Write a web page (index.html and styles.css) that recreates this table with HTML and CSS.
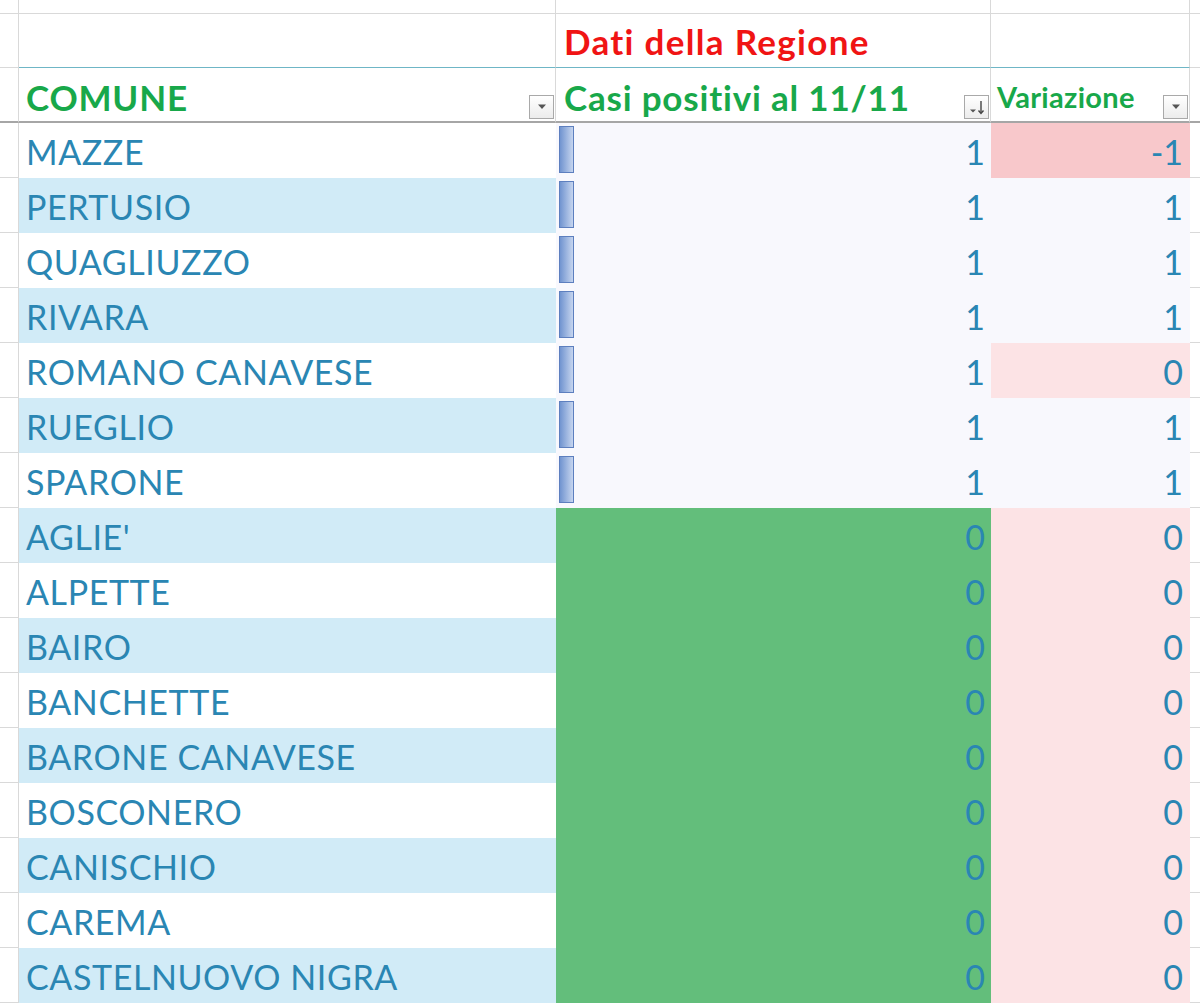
FILE: index.html
```html
<!DOCTYPE html>
<html lang="it">
<head>
<meta charset="utf-8">
<title>Casi positivi</title>
<link rel="stylesheet" href="styles.css">
</head>
<body>
<div class="sheet">
  <div class="row r-top">
    <div class="c a"></div><div class="c b"></div><div class="c cc"></div><div class="c d"></div><div class="c e"></div>
  </div>
  <div class="row r-title">
    <div class="c a"></div>
    <div class="c b"></div>
    <div class="c cc"><span class="title">Dati della Regione</span></div>
    <div class="c d"></div>
    <div class="c e"></div>
  </div>
  <div class="row r-head">
    <div class="c a"></div>
    <div class="c b"><span class="htext">COMUNE</span><span class="fbtn"><svg width="10" height="6" viewBox="0 0 10 6"><path d="M1 0.5h8L5 5z" fill="#555"/></svg></span></div>
    <div class="c cc"><span class="htext">Casi positivi al 11/11</span><span class="fbtn"><svg width="20" height="18" viewBox="0 0 20 18"><path d="M3 11.5h6L6 14.5z" fill="#555"/><path d="M14 3v12" stroke="#444" stroke-width="1.4"/><path d="M11.5 12.5L14 15.5l2.5-3" fill="none" stroke="#444" stroke-width="1.4"/></svg></span></div>
    <div class="c d"><span class="htext small">Variazione</span><span class="fbtn"><svg width="10" height="6" viewBox="0 0 10 6"><path d="M1 0.5h8L5 5z" fill="#555"/></svg></span></div>
    <div class="c e"></div>
  </div>

  <div class="row"><div class="c a"></div><div class="c b name">MAZZE</div><div class="c cc num pos"><span class="bar"></span><span>1</span></div><div class="c d num neg">-1</div><div class="c e"></div></div>
  <div class="row"><div class="c a"></div><div class="c b name band">PERTUSIO</div><div class="c cc num pos"><span class="bar"></span><span>1</span></div><div class="c d num lav">1</div><div class="c e"></div></div>
  <div class="row"><div class="c a"></div><div class="c b name">QUAGLIUZZO</div><div class="c cc num pos"><span class="bar"></span><span>1</span></div><div class="c d num lav">1</div><div class="c e"></div></div>
  <div class="row"><div class="c a"></div><div class="c b name band">RIVARA</div><div class="c cc num pos"><span class="bar"></span><span>1</span></div><div class="c d num lav">1</div><div class="c e"></div></div>
  <div class="row"><div class="c a"></div><div class="c b name">ROMANO CANAVESE</div><div class="c cc num pos"><span class="bar"></span><span>1</span></div><div class="c d num zero">0</div><div class="c e"></div></div>
  <div class="row"><div class="c a"></div><div class="c b name band">RUEGLIO</div><div class="c cc num pos"><span class="bar"></span><span>1</span></div><div class="c d num lav">1</div><div class="c e"></div></div>
  <div class="row"><div class="c a"></div><div class="c b name">SPARONE</div><div class="c cc num pos"><span class="bar"></span><span>1</span></div><div class="c d num lav">1</div><div class="c e"></div></div>
  <div class="row"><div class="c a"></div><div class="c b name band">AGLIE'</div><div class="c cc num green"><span>0</span></div><div class="c d num zero">0</div><div class="c e"></div></div>
  <div class="row"><div class="c a"></div><div class="c b name">ALPETTE</div><div class="c cc num green"><span>0</span></div><div class="c d num zero">0</div><div class="c e"></div></div>
  <div class="row"><div class="c a"></div><div class="c b name band">BAIRO</div><div class="c cc num green"><span>0</span></div><div class="c d num zero">0</div><div class="c e"></div></div>
  <div class="row"><div class="c a"></div><div class="c b name">BANCHETTE</div><div class="c cc num green"><span>0</span></div><div class="c d num zero">0</div><div class="c e"></div></div>
  <div class="row"><div class="c a"></div><div class="c b name band">BARONE CANAVESE</div><div class="c cc num green"><span>0</span></div><div class="c d num zero">0</div><div class="c e"></div></div>
  <div class="row"><div class="c a"></div><div class="c b name">BOSCONERO</div><div class="c cc num green"><span>0</span></div><div class="c d num zero">0</div><div class="c e"></div></div>
  <div class="row"><div class="c a"></div><div class="c b name band">CANISCHIO</div><div class="c cc num green"><span>0</span></div><div class="c d num zero">0</div><div class="c e"></div></div>
  <div class="row"><div class="c a"></div><div class="c b name">CAREMA</div><div class="c cc num green"><span>0</span></div><div class="c d num zero">0</div><div class="c e"></div></div>
  <div class="row"><div class="c a"></div><div class="c b name band">CASTELNUOVO NIGRA</div><div class="c cc num green"><span>0</span></div><div class="c d num zero">0</div><div class="c e"></div></div>
</div>
</body>
</html>
```

FILE: styles.css
```css
* { box-sizing: border-box; }
html, body { margin: 0; padding: 0; background: #fff; }
body { overflow: hidden; font-family: Lato, "Open Sans", sans-serif; }

.sheet { width: 1200px; }

.row {
  display: grid;
  grid-template-columns: 19px 537px 435px 199px 10px;
  height: 55px;
}
.r-top { height: 14px; }
.r-title { height: 54px; }

.c { height: 100%; overflow: hidden; white-space: nowrap; }
.a { border-right: 1px solid #d9d9d9; border-bottom: 1px solid #d9d9d9; }
.e { border-bottom: 1px solid #d9d9d9; }

.r-top .b, .r-top .cc, .r-top .d,
.r-title .b, .r-title .cc, .r-title .d {
  border-right: 1px solid #d9d9d9;
  border-bottom: 1px solid #d9d9d9;
}
.r-title .b, .r-title .cc, .r-title .d { border-bottom-color: #6fb6c6; }

.r-head .c { border-bottom: 2px solid #a6a6a6; }
.r-head .b, .r-head .cc, .r-head .d { border-right: 1px solid #d9d9d9; }

.title {
  display: block;
  padding-left: 8px;
  font-weight: 700;
  font-size: 35px;
  letter-spacing: 1.3px;
  color: #f01414;
  line-height: 50px;
  padding-top: 2px;
}

.r-head .b, .r-head .cc, .r-head .d {
  display: flex;
  align-items: flex-end;
  padding-bottom: 2px;
}
.htext {
  font-weight: 700;
  font-size: 35px;
  letter-spacing: 0.8px;
  color: #18a84a;
  line-height: 40px;
  margin-bottom: 2px;
}
.r-head .b .htext { padding-left: 7px; }
.r-head .cc .htext { padding-left: 8px; }
.r-head .d .htext { padding-left: 6px; }
.htext.small { font-size: 29px; letter-spacing: 0.3px; margin-bottom: 2px; }

.fbtn {
  margin-left: auto;
  margin-right: 1px;
  width: 25px;
  height: 24px;
  border: 1px solid #a9a9a9;
  background: linear-gradient(#ffffff, #ececec);
  display: flex;
  align-items: center;
  justify-content: center;
  flex: none;
}

.name {
  font-size: 34px;
  letter-spacing: 0.6px;
  color: #2a86b3;
  line-height: 52px;
  padding-top: 3px;
  padding-left: 7px;
}
.band { background: #d1ebf7; }

.num {
  font-size: 34px;
  color: #2a86b3;
  line-height: 52px;
  padding-top: 3px;
  display: flex;
  justify-content: flex-end;
}
.cc.num { padding-right: 6px; }
.d.num { padding-right: 7px; }

.pos { background: #f8f8fd; }
.bar {
  margin-right: auto;
  margin-left: 3px;
  width: 15px;
  height: 47px;
  border: 1px solid #5d7fbf;
  background: linear-gradient(90deg, #7194d0, #c6d5ef);
}
.green { background: #63be7b; }
.neg { background: #f8c8cb; }
.zero { background: #fce3e5; }
.lav { background: #f8f8fd; }
```
